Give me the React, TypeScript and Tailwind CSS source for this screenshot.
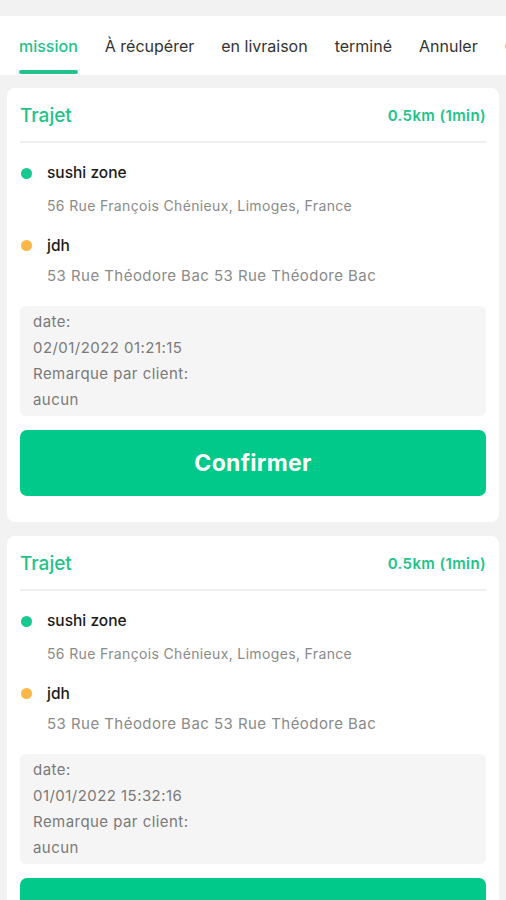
import React from "react";

const tabs = ["mission", "À récupérer", "en livraison", "terminé", "Annuler", "Commentaires"];

function Card({ date }: { date: string }) {
  return (
    <div className="bg-white rounded-[8px] mx-[7px] px-[13px] pb-[26px]">
      <div className="flex items-center justify-between h-[55px] pt-[3px] border-b-2 border-[#efefef]">
        <span className="text-[19px] font-medium text-[#22c38a]">Trajet</span>
        <span className="text-[15px] font-semibold tracking-[0.4px] text-[#22c38a]">0.5km (1min)</span>
      </div>
      <div className="pt-[16px]">
        <div className="flex items-center h-[28px]">
          <span className="w-[11px] h-[11px] rounded-full bg-[#17c891] ml-[1px]" />
          <span className="ml-[15px] text-[15.5px] font-medium text-[#1a1a1a]">sushi zone</span>
        </div>
        <div className="h-[36px] flex items-center pl-[27px] text-[14px] tracking-[0.35px] text-[#8a8a8a]">
          56 Rue François Chénieux, Limoges, France
        </div>
        <div className="flex items-center h-[42px] pt-[3px]">
          <span className="w-[11px] h-[11px] rounded-full bg-[#fdb748] ml-[1px]" />
          <span className="ml-[15px] text-[15.5px] font-medium text-[#1a1a1a]">jdh</span>
        </div>
        <div className="h-[22px] flex items-center pl-[27px] text-[15px] tracking-[0.45px] text-[#8a8a8a]">
          53 Rue Théodore Bac 53 Rue Théodore Bac
        </div>
      </div>
      <div className="mt-[19px] bg-[#f5f5f5] rounded-[6px] px-[13px] py-[3px] text-[15px] tracking-[0.45px] text-[#7a7a7a] leading-[26px]">
        <div>date:</div>
        <div>{date}</div>
        <div>Remarque par client:</div>
        <div>aucun</div>
      </div>
      <button className="mt-[14px] w-full h-[66px] rounded-[7px] bg-[#00c98a] text-white text-[23px] tracking-[0.3px] font-bold">
        Confirmer
      </button>
    </div>
  );
}

export default function App() {
  return (
    <div
      className="w-[506px] h-[900px] overflow-hidden bg-[#f2f2f2]"
      style={{ fontFamily: "Inter, 'Noto Sans', Roboto, sans-serif" }}
    >
      <div className="h-[16px]" />
      <div className="bg-white h-[59px] flex items-start whitespace-nowrap overflow-hidden pl-[19px] gap-[27px]">
        {tabs.map((t, i) => (
          <div key={t} className="relative h-[59px] flex flex-col items-center shrink-0">
            <span
              className={
                "mt-[18px] text-[16px] " +
                (i === 0 ? "text-[#22c38a] font-medium" : "text-[#333]")
              }
            >
              {t}
            </span>
            {i === 0 && (
              <span className="absolute left-0 right-0 top-[54px] h-[4px] rounded-full bg-[#22c38a]" />
            )}
          </div>
        ))}
      </div>
      <div className="h-[13px]" />
      <div className="flex flex-col gap-[14px]">
        <Card date="02/01/2022 01:21:15" />
        <Card date="01/01/2022 15:32:16" />
      </div>
    </div>
  );
}
